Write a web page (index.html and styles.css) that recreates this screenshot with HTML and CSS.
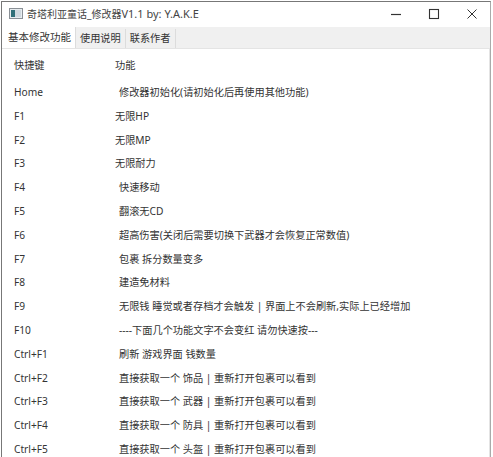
FILE: index.html
```html
<!DOCTYPE html>
<html lang="zh-CN">
<head>
  <meta charset="UTF-8">
  <meta name="viewport" content="width=device-width, initial-scale=1.0">
  <title>奇塔利亚童话_修改器V1.1 by: Y.A.K.E</title>
  <link rel="stylesheet" href="styles.css">
</head>
<body>
  <div class="window">
    <header class="titlebar">
      <svg class="app-icon" width="14" height="11" viewBox="0 0 14 11">
        <rect x="0.5" y="0.5" width="13" height="10" fill="#e8edf0" stroke="#8a9096"/>
        <rect x="2" y="2" width="4" height="7" fill="#2f6f78"/>
        <rect x="6" y="2" width="6" height="7" fill="#cfd8de"/>
      </svg>
      <span class="title">奇塔利亚童话_修改器<span class="title-latin">V1.1 by: Y.A.K.E</span></span>
      <div class="win-buttons">
        <svg width="12" height="12" viewBox="0 0 12 12"><path d="M1 6.5h10" stroke="#333" stroke-width="1.2"/></svg>
        <svg width="12" height="12" viewBox="0 0 12 12"><rect x="1.5" y="1.5" width="9" height="9" fill="none" stroke="#333" stroke-width="1.1"/></svg>
        <svg width="12" height="12" viewBox="0 0 12 12"><path d="M1.5 1.5l9 9M10.5 1.5l-9 9" stroke="#333" stroke-width="1"/></svg>
      </div>
    </header>

    <nav class="tabs">
      <div class="tab active">基本修改功能</div>
      <div class="tab">使用说明</div>
      <div class="tab">联系作者</div>
    </nav>

    <section class="panel">
      <div class="row head"><span class="key">快捷键</span><span class="desc flush">功能</span></div>
      <div class="row"><span class="key">Home</span><span class="desc">修改器初始化(请初始化后再使用其他功能)</span></div>
      <div class="row"><span class="key">F1</span><span class="desc flush">无限HP</span></div>
      <div class="row"><span class="key">F2</span><span class="desc flush">无限MP</span></div>
      <div class="row"><span class="key">F3</span><span class="desc flush">无限耐力</span></div>
      <div class="row"><span class="key">F4</span><span class="desc">快速移动</span></div>
      <div class="row"><span class="key">F5</span><span class="desc">翻滚无CD</span></div>
      <div class="row"><span class="key">F6</span><span class="desc">超高伤害(关闭后需要切换下武器才会恢复正常数值)</span></div>
      <div class="row"><span class="key">F7</span><span class="desc">包裹 拆分数量变多</span></div>
      <div class="row"><span class="key">F8</span><span class="desc">建造免材料</span></div>
      <div class="row"><span class="key">F9</span><span class="desc">无限钱 睡觉或者存档才会触发 | 界面上不会刷新,实际上已经增加</span></div>
      <div class="row"><span class="key">F10</span><span class="desc">----下面几个功能文字不会变红 请勿快速按---</span></div>
      <div class="row"><span class="key">Ctrl+F1</span><span class="desc">刷新 游戏界面 钱数量</span></div>
      <div class="row"><span class="key">Ctrl+F2</span><span class="desc">直接获取一个 饰品 | 重新打开包裹可以看到</span></div>
      <div class="row"><span class="key">Ctrl+F3</span><span class="desc">直接获取一个 武器 | 重新打开包裹可以看到</span></div>
      <div class="row"><span class="key">Ctrl+F4</span><span class="desc">直接获取一个 防具 | 重新打开包裹可以看到</span></div>
      <div class="row"><span class="key">Ctrl+F5</span><span class="desc">直接获取一个 头盔 | 重新打开包裹可以看到</span></div>
    </section>
  </div>
</body>
</html>
```

FILE: styles.css
```css
html, body {
  margin: 0;
  height: 100%;
  overflow: hidden;
  background-color: #fff;
}

body {
  padding: 1px 2px 0 1px;
  box-sizing: border-box;
  font-family: "Noto Sans", "Noto Sans CJK SC", sans-serif;
  font-size: 10.5px;
  color: #333;
}

.window {
  height: 100%;
  border-top: 1px solid #777;
  border-left: 1px solid #777;
  border-right: 1px solid #aaa;
  display: flex;
  flex-direction: column;
  box-sizing: border-box;
}

/* Title bar */
.titlebar {
  height: 25px;
  display: flex;
  align-items: center;
  padding-left: 7px;
  padding-bottom: 2px;
  box-sizing: border-box;
  background-color: #fff;
  flex-shrink: 0;
}

.app-icon {
  margin-right: 4px;
}

.title {
  flex: 1;
  color: #444;
  font-size: 10px;
}

.title-latin {
  font-size: 11px;
}

.win-buttons {
  display: flex;
  gap: 26px;
  padding-right: 12px;
  align-items: center;
}

/* Tabs */
.tabs {
  height: 21px;
  display: flex;
  align-items: flex-end;
  background-color: #f0f0f0;
  flex-shrink: 0;
}

.tab {
  height: 19px;
  line-height: 19px;
  padding: 0 4px;
  font-size: 10.2px;
  background-color: #f0f0f0;
  border-right: 1px solid #dcdcdc;
}

.tab.active {
  height: 21px;
  line-height: 20px;
  font-size: 10.5px;
  padding: 0 4px 0 6px;
  background-color: #fff;
}

/* Key list */
.panel {
  flex: 1;
  background-color: #fff;
  padding: 5px 0 0 12px;
  border-top: 1px solid #e4e4e4;
  border-right: 1px solid #e4e4e4;
  overflow: hidden;
  font-size: 10.2px;
}

.row {
  height: 23.8px;
  line-height: 23.8px;
  display: flex;
  white-space: nowrap;
}

.row.head {
  height: 27px;
}

.key {
  width: 101px;
  flex-shrink: 0;
}

.desc {
  padding-left: 4px;
}

.desc.flush {
  padding-left: 0;
}
```
